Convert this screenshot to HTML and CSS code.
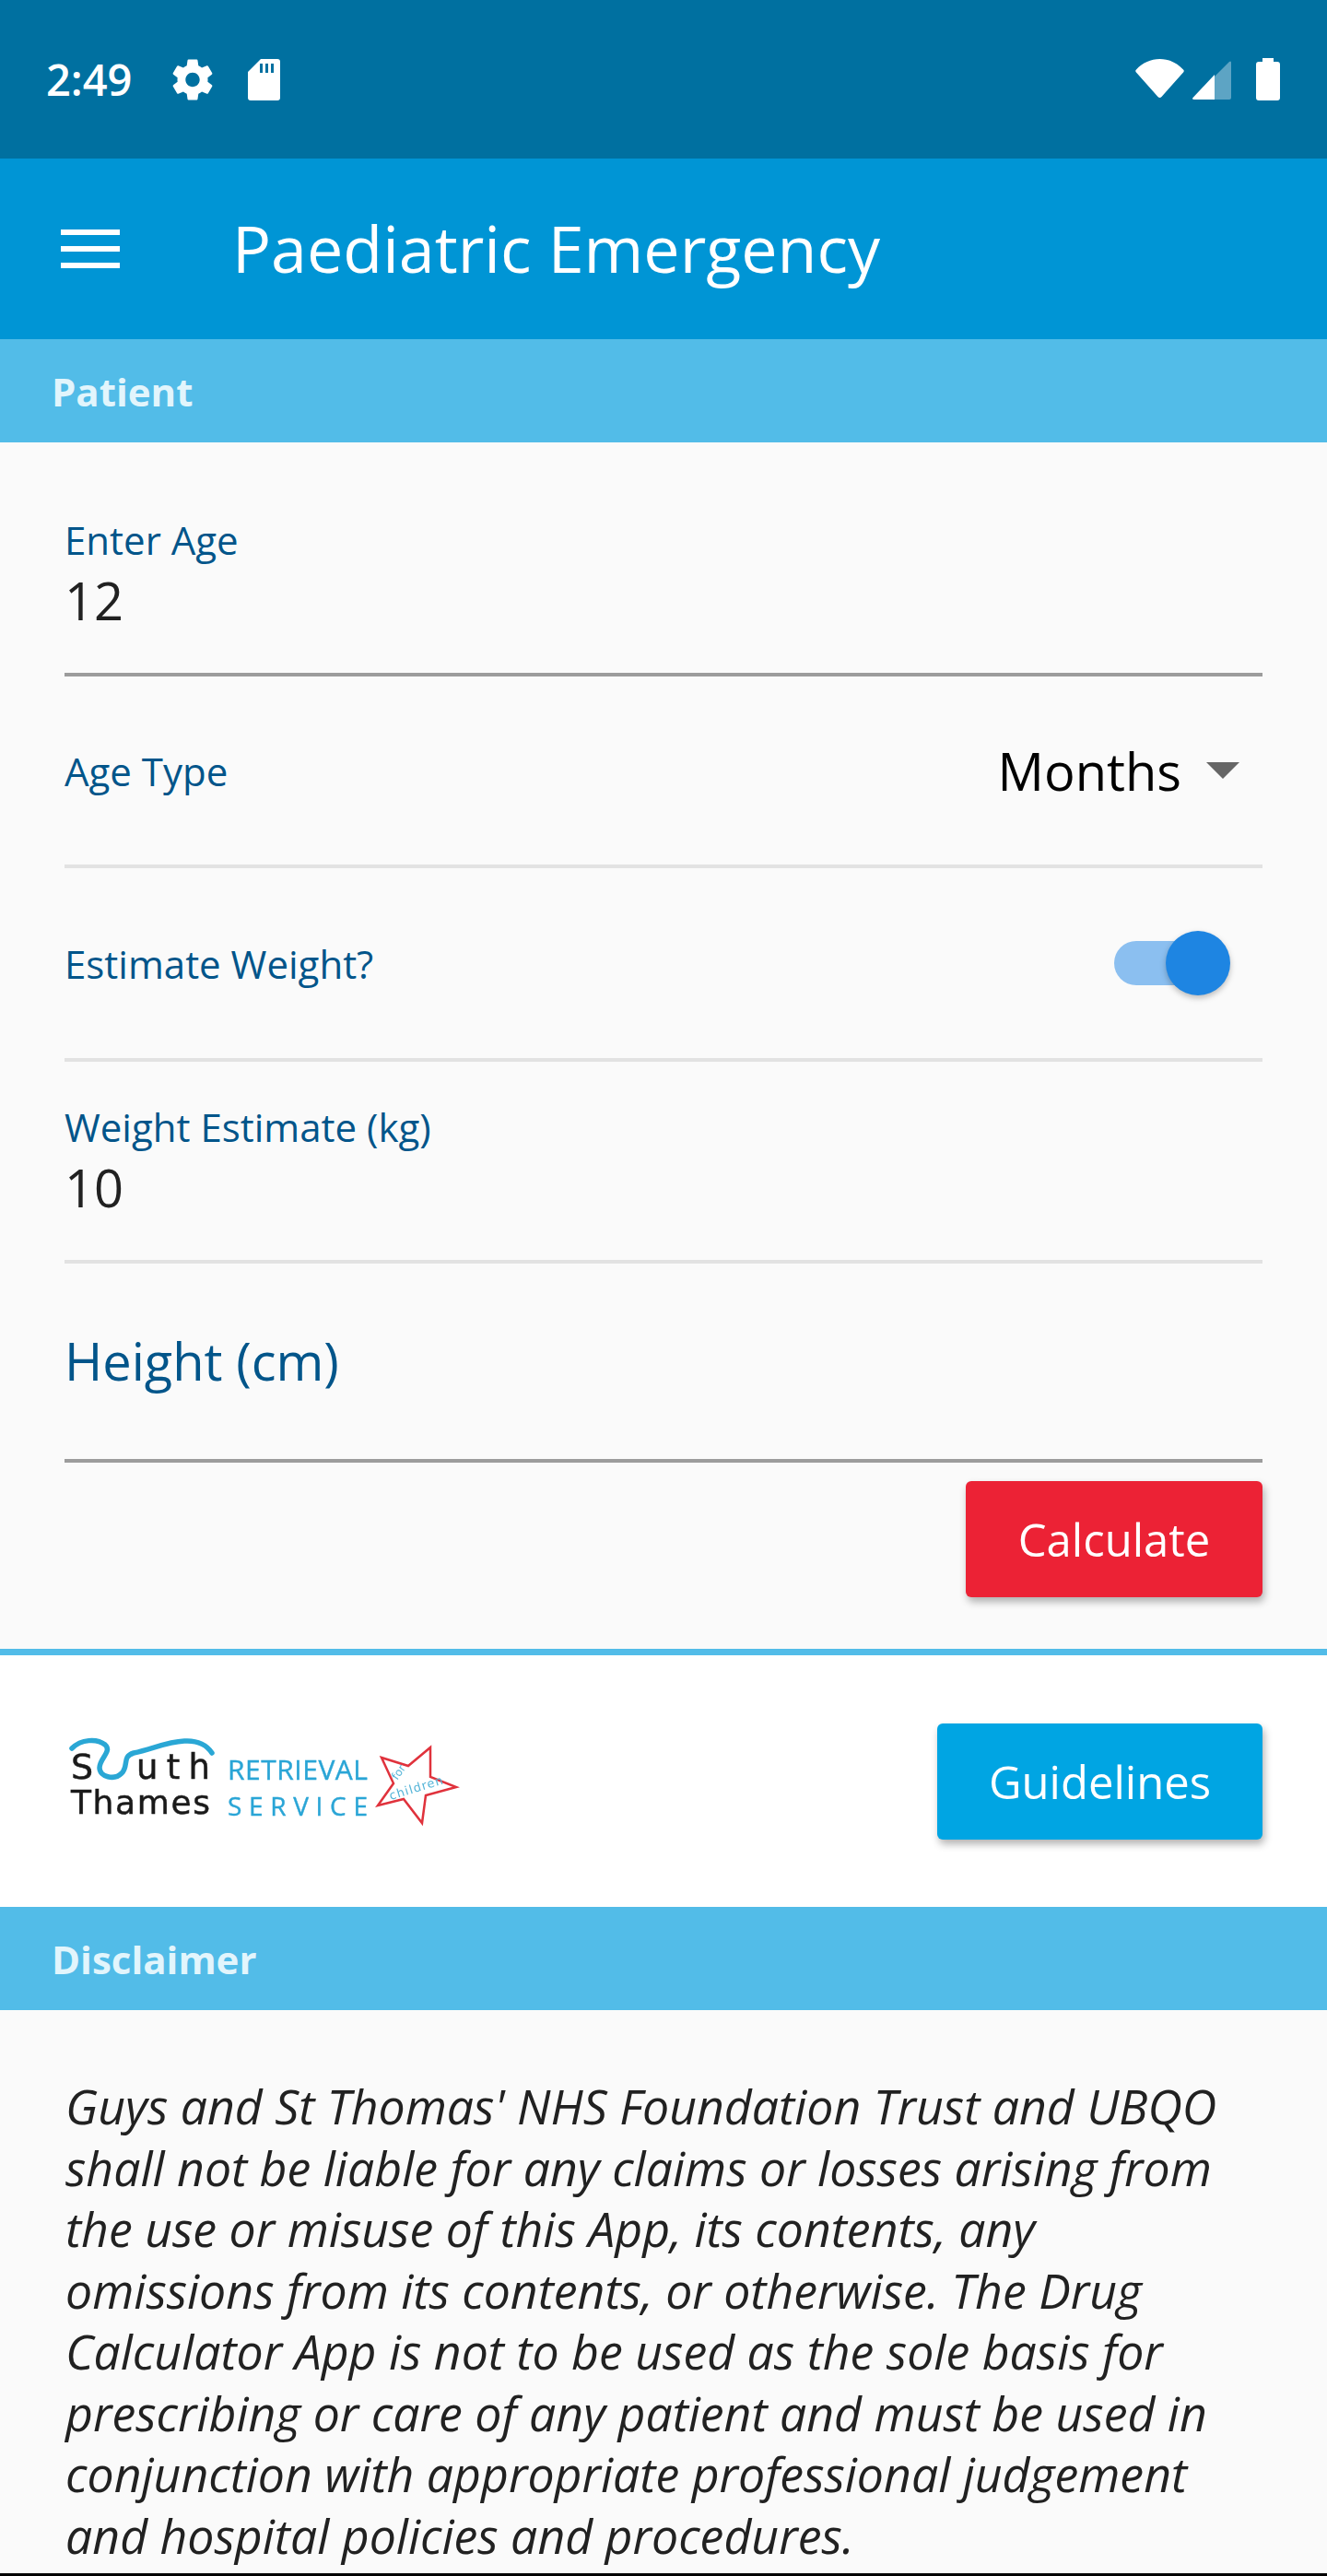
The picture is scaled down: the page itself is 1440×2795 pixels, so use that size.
FILE: index.html
```html
<!DOCTYPE html>
<html lang="en">
<head>
    <meta charset="UTF-8">
    <meta name="viewport" content="width=device-width, initial-scale=1.0">
    <title>Paediatric Emergency</title>
    <link rel="stylesheet" href="styles.css">
</head>
<body>
<div class="app">
    <!-- Android status bar -->
    <div class="status-bar">
        <span class="clock">2:49</span>
        <svg class="icon-gear" viewBox="2 2 20 20"><path fill="#fff" d="M19.43 12.98c.04-.32.07-.64.07-.98s-.03-.66-.07-.98l2.11-1.65c.19-.15.24-.42.12-.64l-2-3.46c-.12-.22-.39-.3-.61-.22l-2.49 1c-.52-.4-1.08-.73-1.69-.98l-.38-2.65C14.46 2.18 14.25 2 14 2h-4c-.25 0-.46.18-.49.42l-.38 2.65c-.61.25-1.17.59-1.69.98l-2.49-1c-.23-.09-.49 0-.61.22l-2 3.46c-.13.22-.07.49.12.64l2.11 1.65c-.04.32-.07.65-.07.98s.03.66.07.98l-2.11 1.65c-.19.15-.24.42-.12.64l2 3.46c.12.22.39.3.61.22l2.49-1c.52.4 1.08.73 1.69.98l.38 2.65c.03.24.24.42.49.42h4c.25 0 .46-.18.49-.42l.38-2.65c.61-.25 1.17-.59 1.69-.98l2.49 1c.23.09.49 0 .61-.22l2-3.46c.12-.22.07-.49-.12-.64l-2.11-1.65zM12 15.5c-1.93 0-3.5-1.57-3.5-3.5s1.57-3.5 3.5-3.5 3.5 1.57 3.5 3.5-1.57 3.5-3.5 3.5z"/></svg>
        <svg class="icon-sd" viewBox="0 0 35 45"><path fill="#fff" fill-rule="evenodd" d="M14 0H32Q35 0 35 3V42Q35 45 32 45H3Q0 45 0 42V14ZM13 5V15H16V5ZM19 5V15H22V5ZM25 5V15H28V5Z"/></svg>
        <div class="status-right">
            <svg class="icon-wifi" viewBox="0 0 53 42"><path fill="#fff" d="M1 11.5C8 4 17 0 26.500 0S45 4 52 11.500C53 12.500 53 13.500 52.300 14.300L28.500 41C27.300 42.300 25.700 42.300 24.500 41L.7 14.300C0 13.500 0 12.500 1 11.500Z"/></svg>
            <svg class="icon-signal" viewBox="0 0 42 42"><path fill="#5da4c4" d="M24 17L40 1Q42 -.5 42 2V40Q42 42 40 42H24Z"/><path fill="#fff" d="M24 15V42H2Q-1 42 .5 40Z"/></svg>
            <svg class="icon-battery" viewBox="0 0 26 46"><path fill="#fff" d="M7 0H19V4H23Q26 4 26 7V43Q26 46 23 46H3Q0 46 0 43V7Q0 4 3 4H7Z"/></svg>
        </div>
    </div>

    <div class="toolbar">
        <div class="menu-icon"><span></span><span></span><span></span></div>
        <h1 class="title">Paediatric Emergency</h1>
    </div>

    <div class="section-bar">Patient</div>

    <div class="form">
        <div class="field field-age">
            <label class="small-label">Enter Age</label>
            <div class="value">12</div>
        </div>
        <div class="row row-type">
            <span class="small-label">Age Type</span>
            <div class="select"><span>Months</span><i class="caret"></i></div>
        </div>
        <div class="row row-switch">
            <span class="small-label">Estimate Weight?</span>
            <div class="switch"><i class="thumb"></i></div>
        </div>
        <div class="field field-weight">
            <label class="small-label">Weight Estimate (kg)</label>
            <div class="value">10</div>
        </div>
        <div class="field field-height">
            <label class="big-label">Height (cm)</label>
        </div>
        <div class="actions">
            <button class="btn btn-red">Calculate</button>
        </div>
    </div>

    <div class="brand-row">
        <svg class="logo" viewBox="30 40 430 105">
            <path class="swoosh" d="M38 57C48 47 65 46 74 53C82 60 68 68 68 78C68 88 84 92 92 84C100 76 92 66 105 62C125 58 140 50 160 49C175 48 185 54 190 62"/>
            <text class="logo-black" x="37" y="90" font-size="38">S</text>
            <text class="logo-black" x="108" y="90" font-size="37" textLength="80">uth</text>
            <text class="logo-black" x="37" y="128" font-size="36" textLength="151">Thames</text>
            <text class="logo-blue" x="207" y="91" font-size="30" textLength="152">RETRIEVAL</text>
            <text class="logo-blue" x="207" y="130" font-size="28" textLength="152">SERVICE</text>
            <path class="star" d="M374 67L403 76L427 56L427 88L455 99L422 108L418 138L398 112L370 119L387 95Z"/>
            <text class="logo-hand" font-size="12" transform="translate(391 92) rotate(-55)">for</text>
            <text class="logo-hand" font-size="13" textLength="60" transform="translate(384 113) rotate(-17)">children</text>
        </svg>
        <button class="btn btn-blue">Guidelines</button>
    </div>

    <div class="section-bar">Disclaimer</div>

    <div class="disclaimer">
        <p>Guys and St Thomas' NHS Foundation Trust and UBQO shall not be liable for any claims or losses arising from the use or misuse of this App, its contents, any omissions from its contents, or otherwise. The Drug Calculator App is not to be used as the sole basis for prescribing or care of any patient and must be used in conjunction with appropriate professional judgement and hospital policies and procedures.</p>
    </div>

    <div class="nav-edge"></div>
</div>
</body>
</html>
```

FILE: styles.css
```css
* {
    box-sizing: border-box;
}
body {
    margin: 0;
    font-family: "Open Sans", sans-serif;
    background: #fafafa;
}
.app {
    height: 100vh;
    display: flex;
    flex-direction: column;
    overflow: hidden;
}

/* status bar */
.status-bar {
    height: 172px;
    flex: none;
    background: #0070a0;
    color: #fff;
    display: flex;
    align-items: center;
    padding: 0 51px 0 50px;
}
.clock {
    font-size: 47px;
    font-weight: 600;
    width: 137px;
}
.icon-gear {
    width: 44px;
    height: 45px;
    margin-right: 38px;
}
.icon-sd {
    width: 35px;
    height: 45px;
}
.status-right {
    margin-left: auto;
    display: flex;
    align-items: center;
}
.icon-wifi {
    width: 53px;
    height: 42px;
    margin-right: 9px;
    margin-top: -3px;
}
.icon-signal {
    width: 42px;
    height: 42px;
    margin-right: 27px;
    margin-top: 1px;
}
.icon-battery {
    width: 26px;
    height: 46px;
}

/* toolbar */
.toolbar {
    height: 196px;
    flex: none;
    background: #0095d5;
    display: flex;
    align-items: center;
    padding-left: 66px;
}
.menu-icon {
    width: 64px;
    height: 42px;
    display: flex;
    flex-direction: column;
    justify-content: space-between;
    margin-right: 122px;
}
.menu-icon span {
    height: 6px;
    background: #fff;
}
.title {
    margin: 0 0 3px;
    color: #fff;
    font-size: 70px;
    line-height: 92px;
    font-weight: 400;
}

.section-bar {
    height: 112px;
    flex: none;
    background: #52bce8;
    color: #e2f5fc;
    font-size: 42px;
    font-weight: 700;
    line-height: 114px;
    padding-left: 56px;
}

/* form */
.form {
    height: 1316px;
    flex: none;
    padding: 0 70px;
    border-bottom: 7px solid #52bce8;
    background: #fafafa;
}
.small-label {
    display: block;
    font-size: 42px;
    line-height: 54px;
    color: #02558a;
}
.row .small-label {
    margin-top: 2px;
}
.value {
    font-size: 56px;
    line-height: 76px;
    color: #212121;
}
.field-age {
    height: 254px;
    padding-top: 79px;
    border-bottom: 4px solid #9c9c9c;
}
.row {
    display: flex;
    align-items: center;
    justify-content: space-between;
    border-bottom: 4px solid #e2e2e2;
}
.row-type {
    height: 208px;
}
.row-switch {
    height: 210px;
}
.select {
    display: flex;
    align-items: center;
    font-size: 56px;
    color: #000;
    padding-right: 25px;
}
.caret {
    width: 0;
    height: 0;
    border-left: 18px solid transparent;
    border-right: 18px solid transparent;
    border-top: 18px solid #666;
    margin-left: 27px;
}
.switch {
    position: relative;
    width: 91px;
    height: 48px;
    margin-right: 70px;
    border-radius: 24px;
    background: #8bbff0;
}
.thumb {
    position: absolute;
    top: -11px;
    left: 56px;
    width: 70px;
    height: 70px;
    border-radius: 50%;
    background: #1e85e2;
    box-shadow: 0 3px 6px rgba(0, 0, 0, 0.25);
}
.field-weight {
    height: 219px;
    padding-top: 44px;
    border-bottom: 4px solid #e2e2e2;
}
.field-height {
    height: 216px;
    padding-top: 67px;
    border-bottom: 4px solid #9c9c9c;
}
.big-label {
    font-size: 56px;
    line-height: 76px;
    color: #02558a;
}
.actions {
    display: flex;
    justify-content: flex-end;
    padding-top: 20px;
}
.btn {
    height: 126px;
    border: none;
    border-radius: 6px;
    color: #fff;
    font-family: "Open Sans", sans-serif;
    font-size: 49px;
    box-shadow: 2px 5px 9px rgba(0, 0, 0, 0.3);
}
.btn-red {
    width: 322px;
    background: #ec2235;
}
.btn-blue {
    width: 353px;
    background: #00a5e3;
}

/* logo row */
.brand-row {
    height: 273px;
    flex: none;
    background: #fff;
    display: flex;
    align-items: center;
    justify-content: space-between;
    padding: 0 70px;
}
.logo {
    width: 430px;
    height: 105px;
    filter: blur(0.5px);
}
.swoosh {
    fill: none;
    stroke: #2aa7d5;
    stroke-width: 5.5;
    stroke-linecap: round;
}
.logo-black {
    font-family: "DejaVu Sans", sans-serif;
    fill: #1a1a1a;
    stroke: #1a1a1a;
    stroke-width: 0.5;
}
.logo-blue {
    font-family: "Open Sans", sans-serif;
    fill: #2aa5d6;
    stroke: #2aa5d6;
    stroke-width: 0.4;
}
.logo-hand {
    font-family: "DejaVu Sans", sans-serif;
    fill: #56b5d8;
}
.star {
    fill: #fff;
    stroke: #e0323c;
    stroke-width: 2.5;
}

/* disclaimer */
.disclaimer {
    flex: 1;
    padding: 71px 70px 0 71px;
    background: #fafafa;
}
.disclaimer p {
    margin: 0;
    width: 1280px;
    font-size: 51.8px;
    line-height: 66.5px;
    font-style: italic;
    color: #212121;
}
.nav-edge {
    height: 3px;
    flex: none;
    background: #000;
}
```
